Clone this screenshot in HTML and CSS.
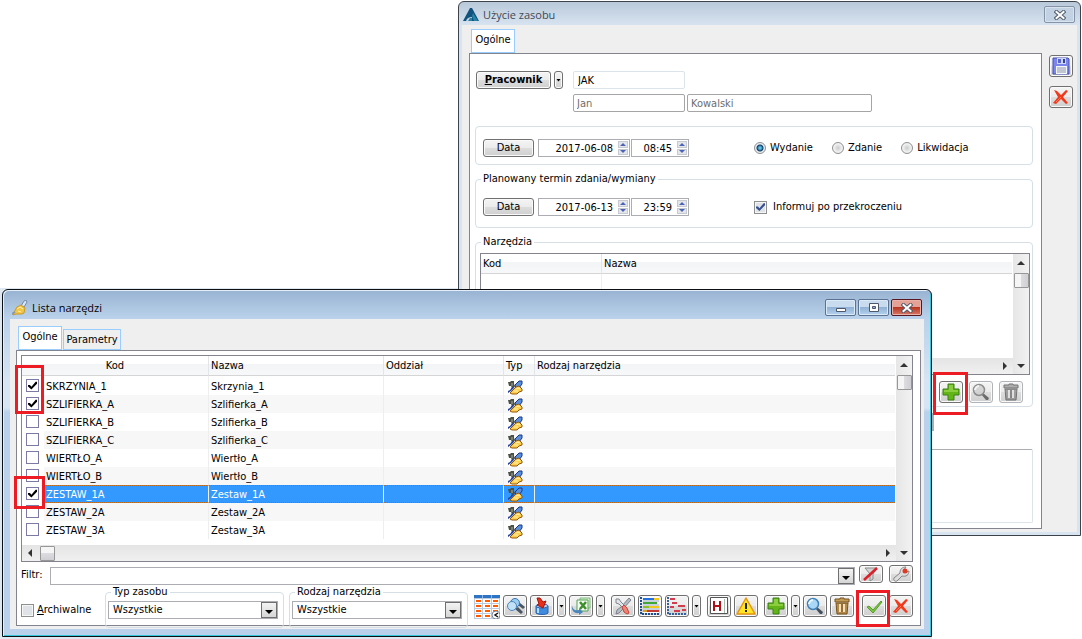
FILE: index.html
```html
<!DOCTYPE html>
<html lang="pl">
<head>
<meta charset="utf-8">
<title>Lista narzędzi</title>
<link rel="stylesheet" href="styles.css">
</head>
<body>
<svg class="sprite" aria-hidden="true">
  <symbol id="tool" viewBox="0 0 15 15">
    <path d="M0 2h2l1-1h3v3l1 2-1 2H4L3 6H1z" fill="#4c5148"/>
    <path d="M4 3v3" stroke="#a9b0a0"/>
    <path d="M7 5l4-4h3v3l-3 4-3 1z" fill="#5b8fdc" stroke="#16388a"/>
    <path d="M0 13v-2l2-1 2-3 2 1-3 3z" fill="#2346a0"/>
    <path d="M2 13l3-3 3-3 3-1 3 3v2l-3 1-2 2H4z" fill="#ffcf50" stroke="#94560c"/>
    <path d="M8 9l2-1 2 1M6 11h4" stroke="#fff2ae" fill="none"/>
  </symbol>
  <symbol id="cross" viewBox="0 0 20 18">
    <path d="M3 2l3 1 4 4 5-5 2 1-5 6 5 6-2 1-5-5-5 5-3-1 5-6z" fill="#ef3a1c"/>
    <path d="M5 14l5-5" stroke="#ff7a5a"/>
  </symbol>
  <symbol id="plus" viewBox="0 0 20 18">
    <path d="M7 1h6v5h5v6h-5v5H7v-5H2V6h5z" fill="#62b417" stroke="#3b7f16"/>
    <path d="M8 2h4v5h5v2H3V7h5z" fill="#8ace3f"/>
  </symbol>
  <symbol id="lens" viewBox="0 0 20 18">
    <path d="M12 10l6 5-1 2-2 0-5-6z" fill="#44525f"/>
    <circle cx="8" cy="7" r="5.500" fill="#a9d7f5" stroke="#3f81b9" stroke-width="1.500"/>
    <path d="M4 7c0-2 2-4 4-4" stroke="#e9f7ff" stroke-width="2" fill="none"/>
  </symbol>
  <symbol id="bin" viewBox="0 0 20 18">
    <path d="M8 2V1h4v1h5v3H3V2z" fill="#c49a57" stroke="#76531f"/>
    <path d="M4 6h12l-1 11H5z" fill="#b58a48" stroke="#76531f"/>
    <path d="M8 7v8M12 7v8" stroke="#f3e0b6" stroke-width="2"/><path d="M10 7v8" stroke="#76531f"/>
  </symbol>
  <symbol id="close" viewBox="0 0 12 10">
    <path d="M2.500 2L9.500 8M9.500 2L2.500 8" stroke="#525c6b" stroke-width="4" stroke-linecap="square"/>
    <path d="M2.500 2L9.500 8M9.500 2L2.500 8" stroke="#fff" stroke-width="2" stroke-linecap="square"/>
  </symbol>
</svg>

<main class="desktop">
  <div class="backdrop"></div>

  <section class="window window-back" aria-label="Użycie zasobu">
    <header class="titlebar">
      <svg class="title-icon" viewBox="0 0 16 16"><path d="M7 1h2l7 13H0z" fill="#11527f"/><path d="M10 6l5 8h-4L9 9z" fill="#2484a5"/><path d="M3 14c1-3 3-4 6-4v4" fill="#c3d2e1"/><path d="M5 14l2-3h2v3z" fill="#2484a5"/></svg>
      <h1>Użycie zasobu</h1>
      <button class="caption-btn caption-idle" aria-label="Zamknij"><svg><use href="#close"/></svg></button>
    </header>
    <div class="client back-client">
      <div class="back-main">
        <nav class="tabs"><button class="tab active">Ogólne</button></nav>
        <form class="panel form">
          <div class="worker">
            <div class="btn-pair">
              <button type="button" class="btn btn-strong"><u>P</u>racownik</button>
              <button type="button" class="btn drop" aria-label="Rozwiń"></button>
            </div>
            <div class="worker-fields">
              <input class="field code" aria-label="Kod pracownika" value="JAK">
              <div class="names">
                <input class="field readonly first" aria-label="Imię" value="Jan" readonly>
                <input class="field readonly last" aria-label="Nazwisko" value="Kowalski" readonly>
              </div>
            </div>
          </div>

          <fieldset class="group issue">
            <div class="term">
              <button type="button" class="btn date-btn">Data</button>
              <div class="spin date"><input aria-label="Data" value="2017-06-08"><span class="arrows"><button type="button" aria-label="Więcej"></button><button type="button" aria-label="Mniej"></button></span></div>
              <div class="spin time"><input aria-label="Godzina" value="08:45"><span class="arrows"><button type="button" aria-label="Więcej"></button><button type="button" aria-label="Mniej"></button></span></div>
              <div class="choices">
                <label><input type="radio" name="kind" checked>Wydanie</label>
                <label><input type="radio" name="kind">Zdanie</label>
                <label><input type="radio" name="kind">Likwidacja</label>
              </div>
            </div>
          </fieldset>

          <fieldset class="group planned">
            <legend>Planowany termin zdania/wymiany</legend>
            <div class="term">
              <button type="button" class="btn date-btn">Data</button>
              <div class="spin date"><input aria-label="Data planowana" value="2017-06-13"><span class="arrows"><button type="button" aria-label="Więcej"></button><button type="button" aria-label="Mniej"></button></span></div>
              <div class="spin time"><input aria-label="Godzina planowana" value="23:59"><span class="arrows"><button type="button" aria-label="Więcej"></button><button type="button" aria-label="Mniej"></button></span></div>
              <div class="choices notify"><label><input type="checkbox" class="tick" checked>Informuj po przekroczeniu</label></div>
            </div>
          </fieldset>

          <fieldset class="group tools">
            <legend>Narzędzia</legend>
            <div class="tools-body">
              <div class="grid-box tools-grid">
                <div class="grid-view">
                  <table class="grid">
                    <colgroup><col class="w-code"><col></colgroup>
                    <thead><tr><th>Kod</th><th>Nazwa</th></tr></thead>
                  </table>
                  <div class="grid-rest"><span></span></div>
                </div>
                <div class="vscroll"><i class="up"></i><b></b><i class="down"></i></div>
                <div class="hscroll"><i class="left"></i><i class="right"></i></div>
              </div>
              <div class="tools-actions">
                <span class="marked mark-add"><button type="button" class="icon-btn" aria-label="Dodaj"><svg><use href="#plus"/></svg></button></span>
                <button type="button" class="icon-btn" disabled aria-label="Podgląd"><svg><use href="#lens"/></svg></button>
                <button type="button" class="icon-btn" disabled aria-label="Usuń"><svg><use href="#bin"/></svg></button>
              </div>
            </div>
          </fieldset>
          <div class="notes-head"></div>
          <textarea class="notes" aria-label="Uwagi"></textarea>
        </form>
      </div>
      <div class="side">
        <button class="icon-btn" aria-label="Zapisz"><svg viewBox="0 0 20 18"><path d="M2 1h15l1 1v15H2z" fill="#7b86ea" stroke="#4650b4"/><path d="M6 1h9v6H6z" fill="#cdd6f6"/><path d="M7 2h3v4H7z" fill="#5a65cc"/><path d="M12 2h2v4h-2z" fill="#34408f"/><path d="M5 9h11v8H5z" fill="#f4f6fd"/><path d="M6 11h9M6 13h9M6 15h9" stroke="#8d93a8"/></svg></button>
        <button class="icon-btn" aria-label="Anuluj"><svg><use href="#cross"/></svg></button>
      </div>
    </div>
  </section>

  <section class="window window-front" aria-label="Lista narzędzi">
    <header class="titlebar">
      <svg class="title-icon" viewBox="0 0 16 16"><path d="M9 6l3-5 2-1 1 2-3 5z" fill="#d8e5f2" stroke="#7089a8"/><path d="M1 14l4-7 4-2 4 3-1 5-2 1H4l-3 1z" fill="#f2c543" stroke="#c99a2a"/><path d="M5 9l3-2 3 2M6 11l3 1" stroke="#fff0ae" fill="none"/><path d="M0 14l3-2" stroke="#8a96ab" stroke-width="2"/></svg>
      <h1>Lista narzędzi</h1>
      <div class="captions">
        <button class="caption-btn" aria-label="Minimalizuj"><svg viewBox="0 0 12 10"><path d="M1.500 5.500h9v3h-9z" fill="#fff" stroke="#4d586b"/></svg></button>
        <button class="caption-btn" aria-label="Maksymalizuj"><svg viewBox="0 0 12 10"><path d="M1.500 .5h9v8h-9z" fill="#fff" stroke="#4d586b"/><path d="M4.500 3.500h3v2h-3z" fill="#8fb0d2" stroke="#4d586b"/></svg></button>
        <button class="caption-btn caption-close" aria-label="Zamknij"><svg><use href="#close"/></svg></button>
      </div>
    </header>
    <div class="client front-client">
      <nav class="tabs"><button class="tab active">Ogólne</button><button class="tab">Parametry</button></nav>
      <div class="panel list">
        <div class="grid-box list-grid">
          <div class="grid-view">
            <table class="grid">
              <colgroup><col class="w-check"><col class="w-kod"><col class="w-nazwa"><col class="w-oddzial"><col class="w-typ"><col></colgroup>
              <thead><tr><th colspan="2" class="center">Kod</th><th>Nazwa</th><th>Oddział</th><th>Typ</th><th>Rodzaj narzędzia</th></tr></thead>
              <tbody>
                <tr><td><input type="checkbox" aria-label="SKRZYNIA_1" checked></td><td>SKRZYNIA_1</td><td>Skrzynia_1</td><td></td><td><svg><use href="#tool"/></svg></td><td></td></tr>
                <tr><td><input type="checkbox" aria-label="SZLIFIERKA_A" checked></td><td>SZLIFIERKA_A</td><td>Szlifierka_A</td><td></td><td><svg><use href="#tool"/></svg></td><td></td></tr>
                <tr><td><input type="checkbox" aria-label="SZLIFIERKA_B"></td><td>SZLIFIERKA_B</td><td>Szlifierka_B</td><td></td><td><svg><use href="#tool"/></svg></td><td></td></tr>
                <tr><td><input type="checkbox" aria-label="SZLIFIERKA_C"></td><td>SZLIFIERKA_C</td><td>Szlifierka_C</td><td></td><td><svg><use href="#tool"/></svg></td><td></td></tr>
                <tr><td><input type="checkbox" aria-label="WIERTŁO_A"></td><td>WIERTŁO_A</td><td>Wiertło_A</td><td></td><td><svg><use href="#tool"/></svg></td><td></td></tr>
                <tr><td><input type="checkbox" aria-label="WIERTŁO_B"></td><td>WIERTŁO_B</td><td>Wiertło_B</td><td></td><td><svg><use href="#tool"/></svg></td><td></td></tr>
                <tr class="selected"><td><input type="checkbox" aria-label="ZESTAW_1A" checked></td><td>ZESTAW_1A</td><td>Zestaw_1A</td><td></td><td><svg><use href="#tool"/></svg></td><td></td></tr>
                <tr><td><input type="checkbox" aria-label="ZESTAW_2A"></td><td>ZESTAW_2A</td><td>Zestaw_2A</td><td></td><td><svg><use href="#tool"/></svg></td><td></td></tr>
                <tr><td><input type="checkbox" aria-label="ZESTAW_3A"></td><td>ZESTAW_3A</td><td>Zestaw_3A</td><td></td><td><svg><use href="#tool"/></svg></td><td></td></tr>
              </tbody>
            </table>
          </div>
          <div class="vscroll"><i class="up"></i><b></b><i class="down"></i></div>
          <div class="hscroll"><i class="left"></i><b></b><i class="right"></i></div>
          <span class="mark mark-top"></span>
          <span class="mark mark-row"></span>
        </div>

        <div class="filter">
          <label for="filter">Filtr:</label>
          <div class="combo"><input id="filter"><button class="combo-btn" aria-label="Rozwiń filtr"></button></div>
          <div class="filter-actions">
            <button class="icon-btn low" aria-label="Wyczyść filtr"><svg viewBox="0 0 20 16"><path d="M4 2h12l-4 6v5l-3 2V8z" fill="#d4d4d4" stroke="#8b8b8b"/><path d="M3 14L16 2" stroke="#d9202a" stroke-width="2.500"/></svg></button>
            <button class="icon-btn low" aria-label="Ustawienia filtra"><svg viewBox="0 0 20 16"><path d="M3 12l6-5c0-4 2-6 6-6l-2 3 2 2 3-1c0 4-3 6-7 5l-5 5c-2 1-4-1-3-3z" fill="#dcdcdc" stroke="#858585"/><circle cx="14" cy="5" r="2.500" fill="#dd3a28"/></svg></button>
          </div>
        </div>

        <div class="bottom">
          <label class="archive"><input type="checkbox" class="tick"><span><u>A</u>rchiwalne</span></label>
          <fieldset class="group pick"><legend>Typ zasobu</legend><div class="combo"><select aria-label="Typ zasobu"><option>Wszystkie</option></select><span class="combo-btn"></span></div></fieldset>
          <fieldset class="group pick"><legend>Rodzaj narzędzia</legend><div class="combo"><select aria-label="Rodzaj narzędzia"><option>Wszystkie</option></select><span class="combo-btn"></span></div></fieldset>
          <div class="toolbar">
            <div class="tool-set">
              <button class="flat-btn" aria-label="Kolumny"><svg viewBox="0 0 26 24"><path d="M0 0h26v24H0z" fill="#fff"/><path d="M0 3.500h26M0 8.500h26M0 13.500h26M0 18.500h26M0 23.500h26M.5 3v21M8.500 3v21M17.500 3v21M25.500 3v21" stroke="#bccadd"/><path d="M0 0h26v3H0z" fill="#2e74c4"/><path d="M8 0h1v3H8zM17 0h1v3h-1z" fill="#8db5e3"/><path d="M2 5h5v2H2zM11 5h5v2h-5zM19 5h5v2h-5zM2 10h5v2H2zM11 10h5v2h-5zM19 10h5v2h-5zM2 15h5v2H2zM11 15h5v2h-5zM19 15h5v2h-5zM2 20h5v2H2zM11 20h5v2h-5z" fill="#ff5a00"/><circle cx="22" cy="20" r="4" fill="#fff" stroke="#7a8aa0"/><path d="M24 18l-3 2 3 2" stroke="#111" stroke-width="1.500" fill="none"/></svg></button>
              <button class="icon-btn" aria-label="Szukaj"><svg viewBox="0 0 20 18"><path d="M10 12l6 5 2-2-5-5zM13 8l5 4 2-2-5-4z" fill="#4a5662"/><circle cx="10" cy="6" r="4.500" fill="#9ccdf2" stroke="#3c75b0"/><circle cx="7" cy="9" r="4.500" fill="#c2e1f7" stroke="#4c86bd"/></svg></button>
              <button class="icon-btn" aria-label="Importuj"><svg viewBox="0 0 20 18"><path d="M4 9v7c2 2 10 2 12 0V9z" fill="#3f8be0" stroke="#2a62b0"/><path d="M6 11v5" stroke="#b4dcff" stroke-width="2"/><ellipse cx="10" cy="9" rx="6" ry="2" fill="#a8d2fa" stroke="#2a62b0"/><path d="M5 1l3 0 3 4 3-1-3 7-6-3 2-1z" fill="#e6301c" stroke="#a3130a"/></svg></button>
              <button class="btn drop tall" aria-label="Więcej opcji importu"></button>
              <button class="icon-btn" aria-label="Eksportuj"><svg viewBox="0 0 20 18"><path d="M9 1h10v10H9z" fill="#d7eed0" stroke="#7dbb7d"/><path d="M6 3h11v11H6z" fill="#f4fbf2" stroke="#52a152"/><path d="M9 5l6 7M15 5l-6 7" stroke="#3d8f2c" stroke-width="2.500"/><path d="M1 8c0 4 3 6 7 5v-2l4 4-4 3v-2C3 17 0 13 1 8z" fill="#4a86ba"/></svg></button>
              <button class="btn drop tall" aria-label="Więcej opcji eksportu"></button>
            </div>
            <div class="tool-set">
              <button class="icon-btn" aria-label="Narzędzia"><svg viewBox="0 0 20 18"><path d="M16 1l2 2-8 9-4 4-3 1 1-4 4-3z" fill="#b6bcc3" stroke="#7b838c"/><path d="M3 2l3 0 2 3 4 4-2 2-4-4-3-1z" fill="#e1e4e8" stroke="#7f858c"/><path d="M11 8l3 3 2 5-2 1-3-2-2-5z" fill="#ee8476" stroke="#c24438"/></svg></button>
              <button class="icon-btn" aria-label="Harmonogram"><svg viewBox="0 0 20 18"><path d="M1 0v17h18" stroke="#1c4d8c" stroke-width="2" stroke-dasharray="2 1" fill="none"/><path d="M3 0h16v16H3z" fill="#fff"/><path d="M3 1h11v2H3z" fill="#2470e0"/><path d="M14 1h5v2h-5zM9 9h10v2H9z" fill="#f4c81b"/><path d="M3 5h14v2H3z" fill="#40a839"/><path d="M3 9h6v2H3z" fill="#8fc02a"/><path d="M3 13h4v2H3z" fill="#d8a020"/><path d="M7 13h12v2H7z" fill="#c23b3b"/><path d="M3 4h16M3 8h16M3 12h16" stroke="#8fa3bb"/></svg></button>
              <button class="icon-btn" aria-label="Wykres Gantta"><svg viewBox="0 0 20 18"><path d="M1 0v17h18" stroke="#34629a" stroke-width="2" stroke-dasharray="2 1" fill="none"/><path d="M3 1h5v2H3zM5 5h5v2H5zM11 8h7v2h-7zM3 9h4v2H3zM7 13h6v2H7zM15 12h4v2h-4z" fill="#d33c4e"/></svg></button>
              <button class="btn drop tall" aria-label="Więcej wykresów"></button>
            </div>
            <div class="tool-set">
              <button class="icon-btn" aria-label="Historia"><svg viewBox="0 0 20 18"><path d="M1.500 .5h17v16h-17z" fill="#fff" stroke="#555"/><path d="M15.500 2v14" stroke="#a9bba9"/><path d="M5 4v10M11 4v10M5 9h6" stroke="#b00f18" stroke-width="2"/></svg></button>
              <button class="icon-btn" aria-label="Ostrzeżenia"><svg viewBox="0 0 20 18"><path d="M10 1l9 16H1z" fill="#ffe524" stroke="#e69512" stroke-width="1.500" stroke-linejoin="round"/><path d="M9 6h2v6H9zM9 13h2v2H9z" fill="#222"/></svg></button>
            </div>
            <div class="tool-set">
              <button class="icon-btn" aria-label="Dodaj"><svg><use href="#plus"/></svg></button>
              <button class="btn drop tall" aria-label="Więcej opcji dodawania"></button>
              <button class="icon-btn" aria-label="Podgląd"><svg><use href="#lens"/></svg></button>
              <button class="icon-btn" aria-label="Usuń"><svg><use href="#bin"/></svg></button>
            </div>
            <div class="tool-set decision">
              <span class="marked mark-ok"><button class="icon-btn" aria-label="Zatwierdź"><svg viewBox="0 0 20 18"><path d="M3 10l2-1 4 4 8-9 1 1-9 11z" fill="#78c838" stroke="#5c9a34"/></svg></button></span>
              <button class="icon-btn" aria-label="Anuluj"><svg><use href="#cross"/></svg></button>
            </div>
          </div>
        </div>
      </div>
    </div>
  </section>
</main>
</body>
</html>
```
FILE: styles.css
```css
* { box-sizing: border-box; }
body {
  margin: 0;
  background: #fff;
  color: #000;
  font: 11px/14px "DejaVu Sans Condensed", "DejaVu Sans", sans-serif;
}
button, input, select, textarea {
  margin: 0;
  padding: 0;
  border: 0;
  border-radius: 0;
  background: none;
  color: inherit;
  font: inherit;
  appearance: none;
  outline: 0;
}
svg { display: block; }
.sprite { position: absolute; width: 0; height: 0; }

.desktop { position: relative; min-height: 100vh; overflow: hidden; }
.backdrop { position: absolute; left: 0; right: 150px; top: 288px; bottom: 0; background: #dfe7f1; }

/* Windows */
.window { position: absolute; border: 1px solid #3d434b; border-radius: 6px 6px 0 0; }
.window-back {
  left: 458px; right: 1px; top: 1px;
  padding: 1px 3px 3px;
  background: linear-gradient(#b9c9d9, #d9e4f1 24px);
}
.window-front {
  left: 2px; right: 150px; top: 289px;
  padding: 1px 7px 7px;
  border-color: #0c1014;
  background: linear-gradient(#98b3d2, #b9d1ea 28px, #d6e4f3 90px, #d6e4f3 118px, #b9d1ea 122px);
  box-shadow: inset 1px 1px #e3eef8, inset -1px -1px #36c6dc;
}
.titlebar { display: flex; align-items: center; }
.window-back .titlebar { height: 22px; padding: 1px 2px 0 1px; }
.window-front .titlebar { height: 28px; padding: 5px 2px 0 2px; }
.titlebar h1 {
  flex: 1;
  margin: 0 0 0 4px;
  font: 11px/16px "Open Sans", "Noto Sans", sans-serif;
}
.window-back h1 { color: #3f4a56; }
.title-icon { width: 16px; height: 16px; }
.captions { display: flex; gap: 2px; }
.caption-btn {
  display: grid;
  place-items: center;
  width: 31px;
  height: 17px;
  border: 1px solid #5b7292;
  border-radius: 2px;
  background: linear-gradient(#c9dbef 50%, #91b2d6 50%, #b5d2ee);
  box-shadow: inset 0 0 0 1px #dce9f7;
}
.caption-btn svg { width: 12px; height: 10px; }
.caption-idle { border-color: #8593a9; background: #c3d2e2; box-shadow: inset 0 0 0 1px #d8e3ee; }
.caption-close {
  border-color: #571823;
  background: linear-gradient(#e5a196 50%, #b93521 50%, #d77a68);
  box-shadow: inset 0 0 0 1px #eab3aa;
}
.client { background: #efefef; }
.back-client { display: flex; gap: 7px; padding: 4px 4px 3px 7px; }
.back-main { flex: 1; min-width: 0; }
.side { display: flex; flex-direction: column; gap: 9px; padding-top: 26px; }
.front-client { padding: 7px 3px 3px 6px; }

/* Tabs and panels */
.tabs { display: flex; align-items: flex-end; gap: 1px; padding-left: 2px; }
.tab { min-width: 58px; height: 21px; border: 1px solid #99ccff; }
.tab.active { min-width: 44px; height: 24px; padding-bottom: 3px; background: #fff; }
.panel { border: 1px solid #84848e; background: #fff; }
.form { display: flex; flex-direction: column; padding: 17px 8px 5px 5px; }
.list { padding: 4px 7px 0 4px; }

/* Buttons */
.btn, .icon-btn {
  border: 1px solid #707070;
  border-radius: 3px;
  background: linear-gradient(#f4f4f4, #ebebeb 50%, #dddddd 50%, #cfcfcf);
  box-shadow: inset 0 0 0 1px #fafafa;
}
.btn-strong { width: 75px; height: 18px; font-weight: bold; }
.date-btn { width: 51px; height: 18px; }
.icon-btn { display: grid; place-items: center; width: 24px; height: 22px; }
.icon-btn svg { width: 20px; height: 18px; }
.icon-btn.low { height: 18px; }
.icon-btn.low svg { height: 16px; }
.icon-btn:disabled { border-color: #b0b4b8; }
.icon-btn:disabled svg { filter: grayscale(1); opacity: .8; }
.flat-btn svg { width: 26px; height: 24px; }
.drop { display: grid; place-items: center; width: 9px; height: 18px; }
.drop.tall { height: 22px; }
.drop::before { content: ""; width: 5px; height: 3px; background: #000; clip-path: polygon(0 0, 100% 0, 50% 100%); }

/* Worker form */
.worker { display: flex; gap: 10px; margin-bottom: 13px; padding-left: 1px; }
.btn-pair { display: flex; gap: 3px; }
.worker-fields { display: flex; flex-direction: column; gap: 5px; }
.field { width: 112px; height: 18px; padding: 1px 4px 0; border: 1px solid #dde3ea; border-radius: 2px; }
.field.readonly { border-color: #a5a5a5; color: #6d6d6d; padding: 1px 3px 0; }
.field.last { width: 185px; }
.names { display: flex; gap: 2px; padding-bottom: 1px; }

.group { min-width: 0; margin: 0; padding: 0; border: 1px solid #d5dfe5; border-radius: 4px; }
.group legend { margin-left: 5px; padding: 0 2px; line-height: 14px; }
.term { display: flex; padding: 0 7px; }
.issue { padding: 12px 0 7px; }
.planned { margin-top: 7px; padding: 12px 0 11px; }
.spin { display: flex; height: 18px; border: 1px solid #abadb3; }
.spin.date { width: 92px; margin-left: 4px; }
.spin.time { width: 58px; margin-left: 1px; }
.spin input { flex: 1; min-width: 0; padding: 1px 4px 0 0; text-align: right; }
.arrows { display: flex; flex-direction: column; gap: 1px; width: 12px; padding: 1px; }
.arrows button { display: grid; place-items: center; flex: 1; background: #e4e6ea; border: 1px solid #c6c9d0; }
.arrows button::before { content: ""; border: 3px solid transparent; border-bottom-color: #4a63b8; border-top: 0; }
.arrows button + button::before { border-top: 3px solid #4a63b8; border-bottom: 0; }
.choices { display: flex; gap: 19px; margin-left: 65px; align-items: center; }
.choices label { display: flex; align-items: center; gap: 4px; }
.choices.notify label { gap: 6px; }
input[type="radio"] {
  width: 12px;
  height: 12px;
  border: 1px solid #8e8f8f;
  border-radius: 50%;
  background: radial-gradient(#c9cbcd, #f2f2f2 60%);
}
input[type="radio"]:checked { background: radial-gradient(circle, #5cc0e8 0 1px, #123f66 3px, #e8eef3 4px); }
input[type="checkbox"] {
  display: grid;
  place-items: center;
  width: 13px;
  height: 13px;
  border: 1px solid #7c7aa5;
  background: #fff;
}
input[type="checkbox"]:checked::before {
  content: "";
  width: 9px;
  height: 9px;
  background: #000;
  clip-path: polygon(0 45%, 22% 45%, 38% 65%, 85% 8%, 100% 8%, 100% 30%, 38% 95%, 0 62%);
}
input.tick { border-color: #8e8f8f; background: #dfe3e8; box-shadow: inset 0 0 0 1px #f6f6f6; }
input.tick:checked::before { background: #364f92; }

/* Grids */
.grid-box {
  position: relative;
  display: grid;
  grid-template-columns: 1fr 16px;
  grid-template-rows: 1fr 16px;
  border: 1px solid #84848e;
}
.tools { margin-top: 7px; }
.tools legend { margin-left: 5px; }
.tools-body { padding: 4px 2px 3px 4px; }
.tools-grid { height: 122px; }
.list-grid { height: 207px; }
.grid-view { display: flex; flex-direction: column; min-width: 0; padding-right: 1px; }
.grid { width: 100%; table-layout: fixed; border-collapse: separate; border-spacing: 0; }
.grid th {
  height: 20px;
  padding: 1px 2px 0;
  border-right: 1px solid #e4e5e8;
  border-bottom: 1px solid #d5d5d5;
  background: linear-gradient(#fff 40%, #f3f4f6 40%, #f7f8fa);
  font-weight: normal;
  text-align: left;
}
.grid th.center { text-align: center; }
.grid th:last-child, .grid td:last-child { border-right: 0; }
.grid td { height: 18px; padding: 2px 2px 0; border-right: 1px solid #eee; }
.grid tbody tr:first-child td { height: 19px; padding-top: 3px; }
.grid tbody td:first-child { padding: 0 4px 1px; border-right: 0; }
.grid tbody tr:first-child td:first-child { padding-top: 1px; }
.grid tbody tr:nth-child(even) td:not(:first-child) { background: #f7f7f7; }
.grid tbody tr.selected td:not(:first-child) {
  padding-top: 1px;
  border-top: 1px dotted #b86a20;
  border-bottom: 1px dotted #b86a20;
  background: #3399ff;
  color: #fff;
}
.grid td svg { width: 15px; height: 15px; margin-left: 2px; }
.w-code { width: 121px; }
.w-check { width: 22px; }
.w-kod { width: 165px; }
.w-nazwa { width: 175px; }
.w-oddzial { width: 120px; }
.w-typ { width: 31px; }
.grid-rest { flex: 1; display: flex; }
.grid-rest span { width: 121px; border-right: 1px solid #eee; }
.vscroll {
  grid-area: 1 / 2 / 3 / 3;
  display: flex;
  flex-direction: column;
  align-items: center;
  padding: 7px 0 6px;
  background: linear-gradient(90deg, #e6e6e6, #f2f2f2);
}
.vscroll b {
  width: 15px;
  height: 15px;
  margin: 8px 0 auto;
  border: 1px solid #979797;
  border-radius: 1px;
  background: linear-gradient(90deg, #f5f5f5 45%, #dcdce0 50%, #d0d0d4);
}
.vscroll i, .hscroll i { border: 4px solid transparent; }
.vscroll .up { border-bottom-color: #333; border-top: 0; }
.vscroll .down { border-top-color: #333; border-bottom: 0; }
.hscroll { display: flex; align-items: center; padding: 0 6px; background: linear-gradient(#e4e4e4, #f0f0f0); }
.hscroll b {
  width: 15px;
  height: 15px;
  margin-left: 8px;
  border: 1px solid #979797;
  border-radius: 1px;
  background: linear-gradient(#f5f5f5 45%, #dcdce0 50%, #d0d0d4);
}
.hscroll .left { border-right-color: #333; border-left: 0; }
.hscroll .right { margin-left: auto; border-left-color: #333; border-right: 0; }
.tools-actions { display: flex; justify-content: flex-end; gap: 6px; padding: 6px 7px 0 0; }
.notes-head { width: 459px; height: 18px; margin-top: 6px; background: #abadb3; }
.notes { height: 74px; margin-top: 18px; border: 1px solid #dde3ea; border-top-color: #abadb3; border-radius: 2px; resize: none; }

/* Filter and bottom bar */
.filter { display: flex; align-items: flex-start; gap: 4px; padding-top: 3px; }
.filter label { padding-top: 3px; width: 25px; white-space: nowrap; }
.filter .combo { flex: 1; margin-top: 2px; }
.filter-actions { display: flex; gap: 6px; }
.combo { display: flex; height: 18px; border: 1px solid #abadb3; }
.combo input, .combo select { flex: 1; min-width: 0; padding-left: 4px; }
.combo-btn { display: grid; place-items: end center; width: 16px; padding-bottom: 3px; border: 1px solid #6f6f6f; background: linear-gradient(#f3f3f3, #d6d6d6); }
.combo-btn::before { content: ""; border: 4px solid transparent; border-top-color: #000; border-bottom: 0; }
.bottom { display: flex; align-items: flex-start; gap: 5px; margin-bottom: -3px; }
.archive { display: flex; align-items: center; gap: 3px; width: 79px; padding-top: 18px; white-space: nowrap; }
.pick { flex: 0 1 179px; padding: 2px 5px 8px 2px; }
.pick legend { margin-left: 3px; }
.toolbar { display: flex; gap: 6px; margin-left: auto; padding-top: 10px; }
.tool-set { display: flex; align-items: flex-start; gap: 3px; }
.decision { padding-left: 2px; }

/* Highlight frames */
.mark { position: absolute; border: 3px solid #ed1c24; }
.mark-top { left: -7px; top: 9px; width: 29px; height: 49px; }
.mark-row { left: -8px; top: 120px; width: 31px; height: 33px; }
.marked { position: relative; }
.marked::after { content: ""; position: absolute; border: 3px solid #ed1c24; pointer-events: none; }
.mark-add::after { inset: -9px -5px -12px -6px; }
.mark-ok::after { inset: -5px -4px -10px -6px; }
```
